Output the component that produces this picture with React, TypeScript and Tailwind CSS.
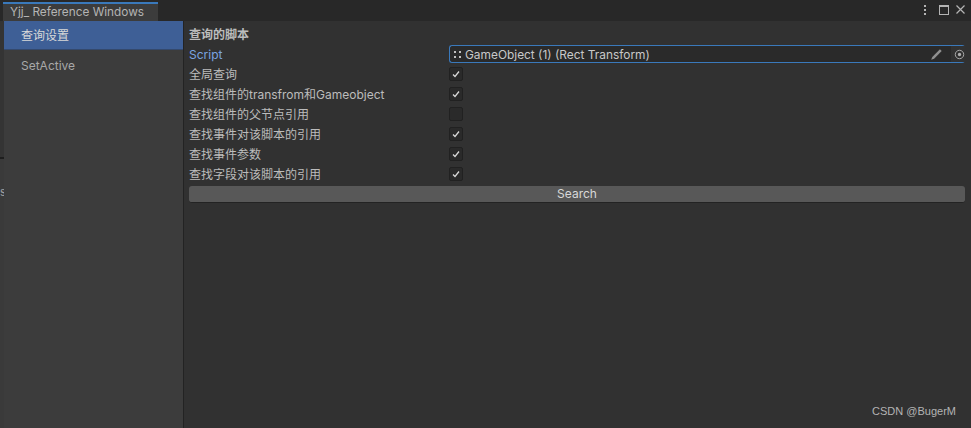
const font = { fontFamily: '"Inter", "Noto Sans CJK SC", sans-serif' }

function Check({ checked }: { checked: boolean }) {
  return (
    <div className="mb-[2px] flex h-[14px] w-[14px] items-center justify-center rounded-[2px] border border-[#212121] bg-[#2a2a2a]">
      {checked && (
        <svg width="10" height="10" viewBox="0 0 10 10" fill="none">
          <path d="M2 5.5 L4 7.5 L8 2.5" stroke="#d8d8d8" strokeWidth="1.3" />
        </svg>
      )}
    </div>
  )
}

const rows = [
  { label: "全局查询", checked: true },
  { label: "查找组件的transfrom和Gameobject", checked: true },
  { label: "查找组件的父节点引用", checked: false },
  { label: "查找事件对该脚本的引用", checked: true },
  { label: "查找事件参数", checked: true },
  { label: "查找字段对该脚本的引用", checked: true },
]

export default function App() {
  return (
    <div
      className="relative flex h-[428px] w-[971px] flex-col overflow-hidden bg-[#313131] text-[12px] text-[#bcbcbc]"
      style={font}
    >
      {/* Tab bar */}
      <div className="flex h-[21px] shrink-0 items-end justify-between bg-[#282828] pl-[3px] pr-[6px]">
        <div className="flex h-[19px] w-[155px] items-center border-t-2 border-[#3a79bb] bg-[#3c3c3c] pl-[7px] text-[11.8px] text-[#b4b4b4]">
          Yjj_ Reference Windows
        </div>
        <div className="flex h-[21px] items-center pb-[2px]">
          <svg width="4" height="12" viewBox="0 0 4 12" fill="#b4b4b4">
            <rect x="1" y="1" width="2" height="2" />
            <rect x="1" y="5" width="2" height="2" />
            <rect x="1" y="9" width="2" height="2" />
          </svg>
          <svg width="10" height="10" viewBox="0 0 10 10" fill="none" className="ml-[12px]">
            <rect x="0.5" y="0.5" width="9" height="9" stroke="#b4b4b4" />
            <rect x="0" y="0" width="10" height="2" fill="#b4b4b4" />
          </svg>
          <svg width="9" height="9" viewBox="0 0 9 9" fill="none" className="ml-[7px]">
            <path d="M0.5 0.5 L8.5 8.5 M8.5 0.5 L0.5 8.5" stroke="#b4b4b4" strokeWidth="1.2" />
          </svg>
        </div>
      </div>

      <div className="flex min-h-0 flex-1">
        {/* Left window edge */}
        <div className="flex w-[4px] shrink-0 flex-col bg-[#3a3a3a]">
          <div className="h-[136px] bg-[#343434]" />
          <div className="h-[2px] bg-[#1e1e1e]" />
          <div className="mt-[26px] overflow-hidden text-[11px] leading-[14px] text-[#a0a0a0]">s</div>
        </div>

        {/* Sidebar */}
        <div className="w-[180px] shrink-0 border-r border-[#232323] bg-[#3c3c3c]">
          <div className="flex h-[29px] items-center border-b border-[#34496d] bg-[#3e5f96] pl-[17px] pt-[2px] text-[#d8d8d8]">
            查询设置
          </div>
          <div className="flex h-[30px] items-center pl-[17px] pt-[2px] text-[#a8a8a8]">SetActive</div>
        </div>

        {/* Main panel */}
        <div className="min-w-0 flex-1 pl-[5px] pr-[6px] pt-[4px]">
          <div className="flex h-[20px] items-center font-bold">查询的脚本</div>

          <div className="flex h-[20px] items-center">
            <div className="w-[260px] shrink-0 text-[#7ba4e0]">Script</div>
            <div className="mb-[2px] flex h-[18px] flex-1 items-center rounded-[3px] border border-[#3a79bb] border-r-0 bg-[#2a2a2a] pl-[3px] text-[#c8c8c8]">
              <svg width="10" height="10" viewBox="0 0 10 10" fill="#c0c0c0" className="mt-[1px] shrink-0">
                <rect x="1" y="1" width="2" height="2" />
                <rect x="6" y="1" width="2" height="2" />
                <rect x="1" y="6" width="2" height="2" />
                <rect x="6" y="6" width="2" height="2" />
              </svg>
              <span className="ml-[2px] mt-[1px] flex-1 whitespace-nowrap text-[11.9px]">GameObject (1) (Rect Transform)</span>
              <svg width="14" height="14" viewBox="0 0 12 12" fill="none" className="mr-[7px] shrink-0">
                <path d="M1 11 L2 8.5 L8.5 2 L10 3.5 L3.5 10 Z" fill="#909090" />
              </svg>
              <div className="flex h-[16px] w-[14px] shrink-0 items-center justify-start bg-[#323232] pl-[3px]">
                <svg width="11" height="11" viewBox="0 0 12 12" fill="none" className="shrink-0">
                  <circle cx="6" cy="6" r="4.6" stroke="#b0b0b0" />
                  <circle cx="6" cy="6" r="1.8" fill="#b0b0b0" />
                </svg>
              </div>
            </div>
          </div>

          {rows.map((row) => (
            <div key={row.label} className="flex h-[20px] items-center">
              <div className="w-[260px] shrink-0 whitespace-nowrap">{row.label}</div>
              <Check checked={row.checked} />
            </div>
          ))}

          <div className="mt-[1px] flex h-[17px] items-center justify-center rounded-[3px] border-b border-[#232323] bg-[#585858] text-[#d8d8d8]">
            Search
          </div>
        </div>
      </div>

      {/* Watermark */}
      <div
        className="absolute bottom-[9px] right-[15px] text-[11px] text-[#b4b4b4]"
        style={{ fontFamily: '"Liberation Sans", sans-serif' }}
      >
        CSDN @BugerM
      </div>
    </div>
  )
}
